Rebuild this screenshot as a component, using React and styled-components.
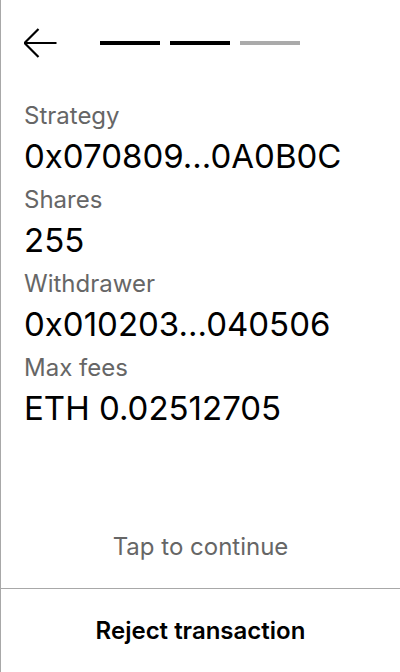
import styled, { createGlobalStyle } from "styled-components";

const GlobalStyle = createGlobalStyle`
  html, body {
    margin: 0;
    padding: 0;
    background: #fff;
  }
  body {
    font-family: Inter, "Noto Sans", sans-serif;
    color: #000;
  }
`;

const fields = [
  { label: "Strategy", value: "0x070809...0A0B0C" },
  { label: "Shares", value: "255" },
  { label: "Withdrawer", value: "0x010203...040506" },
  { label: "Max fees", value: "ETH 0.02512705" },
];

const steps = [true, true, false];

const App = () => {
  return (
    <>
      <GlobalStyle />
      <Screen>
        <Header>
          <BackButton aria-label="Back">
            <svg width="34" height="32" viewBox="0 0 34 32" fill="none">
              <path
                d="M14.5 2 L0.5 16 L14.5 30 M0.5 16 H32.5"
                stroke="#000"
                strokeWidth="2.2"
                strokeLinecap="butt"
                strokeLinejoin="miter"
              />
            </svg>
          </BackButton>
          <Progress>
            {steps.map((done, i) => (
              <Step key={i} $done={done} />
            ))}
          </Progress>
        </Header>

        <Body>
          {fields.map((f) => (
            <Field key={f.label}>
              <Label>{f.label}</Label>
              <Value>{f.value}</Value>
            </Field>
          ))}
        </Body>

        <TapHint>Tap to continue</TapHint>
        <RejectButton>Reject transaction</RejectButton>
      </Screen>
    </>
  );
};

export default App;

const Screen = styled.div`
  width: 400px;
  height: 672px;
  box-sizing: border-box;
  border-left: 1px solid #a8a8a8;
  display: flex;
  flex-direction: column;
  overflow: hidden;
`;

const Header = styled.div`
  height: 86px;
  display: flex;
  align-items: center;
  padding: 0 0 0 23px;
  gap: 42px;
`;

const BackButton = styled.div`
  width: 34px;
  height: 32px;
  display: flex;
  align-items: center;
`;

const Progress = styled.div`
  display: flex;
  gap: 10px;
  margin-top: -1px;
`;

const Step = styled.div`
  width: 60px;
  height: 4px;
  background: ${(p) => (p.$done ? "#000" : "#aaaaaa")};
`;

const Body = styled.div`
  flex: 1;
  padding: 13px 23px 0;
  display: flex;
  flex-direction: column;
  gap: 3px;
`;

const Field = styled.div`
  display: flex;
  flex-direction: column;
`;

const Label = styled.div`
  font-size: 24px;
  line-height: 34px;
  color: #666;
`;

const Value = styled.div`
  font-size: 33px;
  line-height: 47px;
  color: #000;
  white-space: nowrap;
`;

const TapHint = styled.div`
  text-align: center;
  font-size: 24px;
  line-height: 32px;
  color: #666;
  padding-bottom: 25px;
`;

const RejectButton = styled.div`
  height: 83px;
  border-top: 1px solid #a8a8a8;
  display: flex;
  align-items: center;
  justify-content: center;
  font-size: 24px;
  font-weight: 600;
  color: #000;
`;
